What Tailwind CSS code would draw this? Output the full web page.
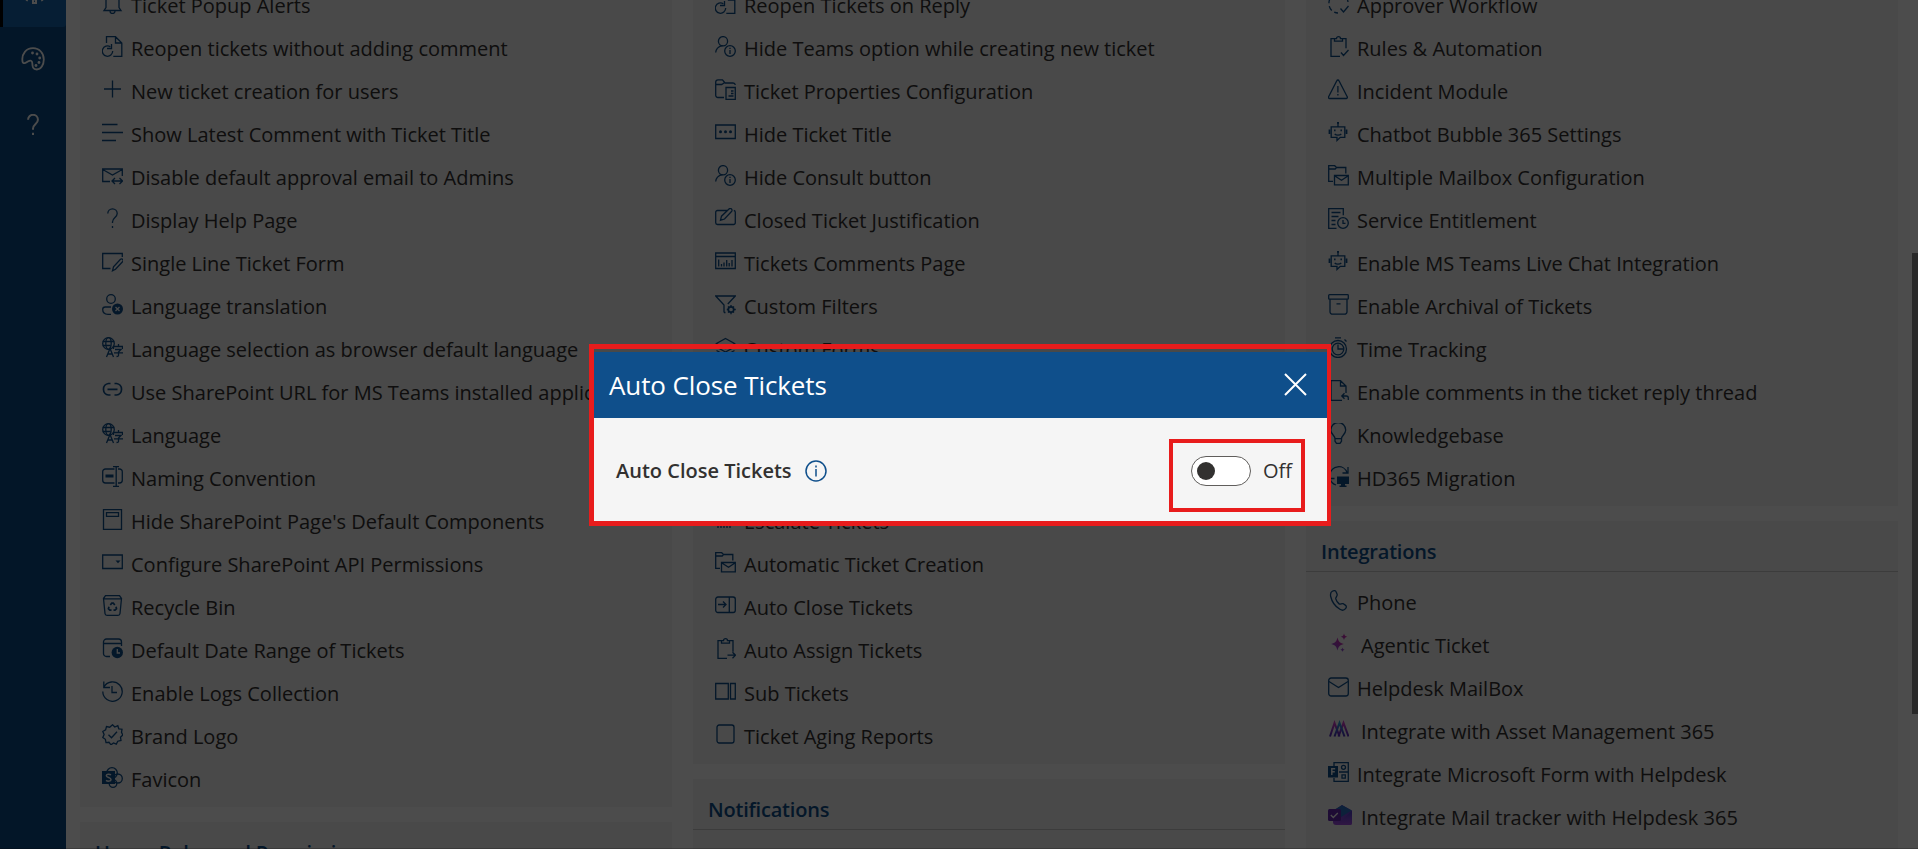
<!DOCTYPE html>
<html lang="en">
<head>
<meta charset="utf-8">
<title>Helpdesk 365 Settings</title>
<script src="https://cdn.jsdelivr.net/npm/@tailwindcss/browser@4"></script>
</head>
<body class="h-screen overflow-hidden bg-white font-['Open_Sans','Noto_Sans',sans-serif] text-[20px] text-[#323130]">

<svg class="absolute size-0" aria-hidden="true">
  <defs>
    <linearGradient id="pink" x1="0" y1="1" x2="1" y2="0"><stop offset="0" stop-color="#7f5ae0"/><stop offset="1" stop-color="#e21ea0"/></linearGradient>
    <linearGradient id="mix" x1="0" y1="0" x2="0" y2="1"><stop offset="0" stop-color="#d040c8"/><stop offset="1" stop-color="#4a28b8"/></linearGradient>
    <linearGradient id="teal" x1="0" y1="0" x2="0" y2="1"><stop offset="0" stop-color="#2fa0d8"/><stop offset="1" stop-color="#4a28b8"/></linearGradient>
    <linearGradient id="violet" x1="0" y1="0" x2="0" y2="1"><stop offset="0" stop-color="#4a3cc8"/><stop offset="1" stop-color="#a04ce0"/></linearGradient>
  </defs>
  <symbol id="bell" viewBox="0 0 21 21"><path d="M2 17.5h17L17 14.500V7.500a6.500 6.500 0 0 0-13 0v7zM8 18a2.500 2.500 0 0 0 5 0"/></symbol>
  <symbol id="reopen" viewBox="0 0 21 21"><path d="M4.500 7V.7h9L19.800 7v13.300h-8.500M13.500.7V7h6.300M8.300 10.700A5.200 5.200 0 1 0 10.700 15M9.500 8v4.500H5"/></symbol>
  <symbol id="plus" viewBox="0 0 21 21"><path d="M10.500 1.500v17M2 10h17"/></symbol>
  <symbol id="lines" viewBox="0 0 21 21"><path d="M0 2.500h15.500M0 10.500h21M0 18.500h14"/></symbol>
  <symbol id="mailswap" viewBox="0 0 21 21"><path d="M8 16.500H.7V4h19.600v7M.7 4.500l9.800 5.500 9.800-5.500M10 16h10.500M13 13l-3 3 3 3M17.500 13l3 3-3 3"/></symbol>
  <symbol id="question" viewBox="0 0 21 21"><path d="M5.800 5.500a4.700 4.700 0 0 1 9.400 0c0 4-4.700 4-4.700 8.500V15"/><path d="M10.500 18v2"/></symbol>
  <symbol id="formedit" viewBox="0 0 21 21"><path d="M8.500 17.500H.7V2.500h19.600V6M10.500 19.800l1-4 7-7.500a1.600 1.600 0 0 1 2 2.500l-7 7.500z"/></symbol>
  <symbol id="userx" viewBox="0 0 21 21"><circle cx="9" cy="5" r="4.300"/><path d="M9 20.300H6C3 20.300.7 18.500.7 15.500c0-1.500 1-2.500 2.500-2.500H9"/><circle cx="15.500" cy="15" r="5.500" fill="currentColor" stroke="none"/><path d="M13.500 13l4 4M17.500 13l-4 4" stroke="#f3f3f3"/></symbol>
  <symbol id="lang" viewBox="0 0 21 21"><circle cx="6.500" cy="6.500" r="5.800"/><ellipse cx="6.500" cy="6.500" rx="2.700" ry="5.800"/><path d="M.7 4.500h11.600M.7 8.500h8"/><path d="M4.500 20l3.500-8.500 3.500 8.500M5.700 17h4.600M16.500 7v2.500M11.500 12V9.500h9V12M13 12.500h6l-2.500 2.500v3.500c0 1-.5 1-2 1M12 15.800h9"/></symbol>
  <symbol id="link" viewBox="0 0 21 21"><path d="M8.500 3.500H6.500a5.800 5.800 0 0 0 0 11.500h2M12.500 3.500h2a5.800 5.800 0 0 1 0 11.500h-2M5.500 9.300h10" stroke-width="1.700"/></symbol>
  <symbol id="rename" viewBox="0 0 21 21"><path d="M12.500 3H3.500A2.800 2.800 0 0 0 .7 5.800v8.400A2.800 2.800 0 0 0 3.500 17h9M16 3h1.500a2.800 2.800 0 0 1 2.800 2.800v8.400a2.800 2.800 0 0 1-2.800 2.800H16M14.200.7v19.600M11 .7h6M11 20.300h6"/><path d="M3.500 10h8" stroke-width="3"/></symbol>
  <symbol id="page" viewBox="0 0 21 21"><path d="M1.500.7h18v19.600h-18zM4.500 3.700h12v3.600h-12z"/></symbol>
  <symbol id="combo" viewBox="0 0 21 21"><path d="M.7 3h19.600v13.500H.7z"/><path d="M13.500 8.500h5l-2.500 2.800z" fill="currentColor" stroke="none"/></symbol>
  <symbol id="bin" viewBox="0 0 21 21"><path d="M1.500 3.500 3.500.7h14l2 2.800-1.500 15a2 2 0 0 1-2 1.800H5a2 2 0 0 1-2-1.800zM1.500 3.900h18"/><path d="M8.300 10l1.500-1.800h1.500l1.500 1.800M14 11.800l.5 2-1.500 1.400h-1.500M9.500 15.200H7.800l-1.400-1.400.6-2" stroke-width="1.700"/></symbol>
  <symbol id="caltime" viewBox="0 0 21 21"><path d="M8 18.500H4.500a3 3 0 0 1-3-3V4a3 3 0 0 1 3-3h12a3 3 0 0 1 3 3v4M1.500 5.500h18"/><circle cx="15.300" cy="14.500" r="5.700" fill="currentColor" stroke="none"/><path d="M15.300 11v4H18" stroke="#f3f3f3"/></symbol>
  <symbol id="history" viewBox="0 0 21 21"><path d="M1.800 6.300A9.700 9.700 0 1 1 .8 10.500M1.800.5V6.500H8M10 5v6.500h5" /></symbol>
  <symbol id="badge" viewBox="0 0 21 21"><path d="M10.500.8l2.300 2.200 3-1.300 1 3.100 3.200.4-.5 3.200 1.300 2.600-2.300 2.300.5 3.200-3.200.7-1.500 2.900-2.800-1.200-2.500 1.900-2-2.500-3 .3-.6-3.300L.8 13.500l1.300-3L.8 7.500l2.800-1.600L4.500 2.600l3.200.6z"/><path d="M6.500 10.800l3 3 5.500-6"/></symbol>
  <symbol id="sharepoint" viewBox="0 0 21 21"><circle cx="10" cy="6" r="5.300"/><circle cx="15.800" cy="11.500" r="4.500"/><circle cx="11" cy="16.500" r="3.800"/><path d="M0 4h13v13H0z" fill="currentColor" stroke="none"/><path d="M9 7.800C7.500 6.800 4.300 6.800 4.300 8.800s4.700 1.400 4.700 3.600-3.500 2-5 1" stroke="#f3f3f3" stroke-width="1.500"/></symbol>
  <symbol id="userinfo" viewBox="0 0 21 21"><circle cx="8" cy="5.200" r="4.600"/><path d="M.7 16.500c0-3 2.500-6.500 7-6.800"/><circle cx="15" cy="15" r="5.300"/><path d="M15 14v4M15 11.700v1.300"/></symbol>
  <symbol id="folderdoc" viewBox="0 0 21 21"><path d="M9 18.500H3A2.300 2.300 0 0 1 .7 16V3A2.300 2.300 0 0 1 3 .9h4.500L10 4h8a2.300 2.300 0 0 1 2.300 2M.7 5.500h6L9 4M11 8.500h9.300v11.800H11zM16 12h2.500M16 14.500h2.500M13.500 17h5"/></symbol>
  <symbol id="dots" viewBox="0 0 21 21"><path d="M.7 3h19.600v13.500H.7z"/><g fill="currentColor" stroke="none"><circle cx="5.500" cy="9.800" r="1.500"/><circle cx="10.500" cy="9.800" r="1.500"/><circle cx="15.500" cy="9.800" r="1.500"/></g></symbol>
  <symbol id="edit" viewBox="0 0 21 21"><path d="M12 2.500H2.500A1.800 1.800 0 0 0 .7 4.300v10.400a1.800 1.800 0 0 0 1.800 1.800h16a1.800 1.800 0 0 0 1.800-1.800V4.300a1.800 1.800 0 0 0-1.500-1.800M5.500 12.200l1-4L14 1a1.700 1.700 0 0 1 2.500 2.500L9.500 11z"/></symbol>
  <symbol id="chart" viewBox="0 0 21 21"><path d="M.7 2h19.600v15.500H.7zM.7 5.500h19.600M3.700 8.500v7M6.500 13v2.500M9 11.500v4M11.700 9v6.500M14.200 12v3.500M17 9v6.500"/></symbol>
  <symbol id="filter" viewBox="0 0 21 21"><path d="M9 18.500V11L.7 2h19.600l-7.500 8M9 18.500h1.500"/><circle cx="16" cy="15.500" r="2.700" stroke-width="1.700"/><path d="M16 11v2M16 18v2.200M11.800 15.500h2M18.500 15.500h2.300M13 12.500l1.300 1.300M19 12.500l-1.300 1.300M13 18.500l1.300-1.300M19 18.500l-1.300-1.300"/></symbol>
  <symbol id="layers" viewBox="0 0 21 21"><path d="M10.500 1.500l9 5-9 5-9-5zM1.500 10l9 5 9-5M1.500 13.500l9 5 9-5"/></symbol>
  <symbol id="bars" viewBox="0 0 21 21"><path d="M3 10v9M6 10v9M9 12v7M12 10v9M15 10v9"/></symbol>
  <symbol id="foldermail" viewBox="0 0 21 21"><path d="M5 16.300H.7V.7h6L8.500 2.500h9.300v6M.7 4h6.500l1.300-1.500M6.500 10.500h13.800v9.300H6.500zM6.500 10.800l7 4.500 6.800-4.500"/></symbol>
  <symbol id="panel" viewBox="0 0 21 21"><rect x=".7" y="2" width="19.600" height="15.500" rx="2.200"/><path d="M14.300 2v15.500M3 9.500h8M8 6.500l3 3-3 3"/></symbol>
  <symbol id="cliparrow" viewBox="0 0 21 21"><path d="M12 20.300H3V2.700h3.500M14.500 2.700H18v11M6.500 5.200V2.700h2a2 2 0 0 1 4 0h2v2.500zM12.500 17.200h7.800M17.500 14.200l3 3-3 3"/></symbol>
  <symbol id="columns" viewBox="0 0 21 21"><path d="M.7 2.500h12.600V18H.7zM15.500 2.500h4.800V18h-4.800z"/></symbol>
  <symbol id="tablet" viewBox="0 0 21 21"><rect x="2" y="1" width="17" height="18" rx="2.200"/></symbol>
  <symbol id="progress" viewBox="0 0 21 21"><path d="M20 9a9.500 9.500 0 0 0-19 2c0 5 4 9 9 9" stroke-dasharray="5 3"/><path d="M12.500 15.500l3 3.500 5-6"/></symbol>
  <symbol id="clipcheck" viewBox="0 0 21 21"><path d="M12 20.300H3V2.700h3.500M14.500 2.700H18v9.500M6.500 5.200V2.700h2a2 2 0 0 1 4 0h2v2.500zM13 16.500l2.500 3 5-5.500"/></symbol>
  <symbol id="warn" viewBox="0 0 21 21"><path d="M8.800 1.700a1.200 1.200 0 0 1 2.200 0l8.200 16a1.200 1.200 0 0 1-1 1.800H1.600a1.200 1.200 0 0 1-1-1.800zM9.900 7v6.500M9.900 15v1.500"/></symbol>
  <symbol id="bot" viewBox="0 0 21 21"><path d="M3.200 4.800h13.600v10.500h-4.500L9 18.500v-3.200H3.200zM10 1v3.800M6.700 12c1.500 1.600 5 1.600 6.600 0"/><path d="M1.500 7.500v4.500M18.500 7.500v4.500M9 .9h2" stroke-width="1.800"/><path d="M6.800 7.500v1.800M13.200 7.500v1.800" stroke-width="1.500"/></symbol>
  <symbol id="sla" viewBox="0 0 21 21"><path d="M8.500 20.300H.7V.7h14.600v6.500M3.500 4.500h9M3.500 8.500h7M3.500 12.500h4M3.500 16.500h4"/><circle cx="15" cy="15" r="5.300"/><path d="M15 12v3.300h2.500"/></symbol>
  <symbol id="archive" viewBox="0 0 21 21"><rect x=".7" y=".7" width="19.600" height="4.500" rx=".8"/><path d="M2 5.200v12.500a2.500 2.500 0 0 0 2.500 2.500h12a2.500 2.500 0 0 0 2.500-2.500V5.200M8.500 9.800h4"/></symbol>
  <symbol id="timer" viewBox="0 0 21 21"><circle cx="10" cy="12" r="8.500"/><circle cx="10" cy="12" r="5.800"/><path d="M7 .8h6M10 7.500V12h5M16.500 2.500l2 2"/></symbol>
  <symbol id="pagereply" viewBox="0 0 21 21"><path d="M14 20.300H3V.7h9.500L18 6v7M12.500.7V6H18M20.300 20v-2c0-1.500-1-2-2-2h-4.500M16.500 13.300L13.800 16l2.700 2.700"/></symbol>
  <symbol id="bulb" viewBox="0 0 21 21"><path d="M7 15.700c0-3.200-4.200-4.500-4.200-8.700a7.200 7.200 0 0 1 14.900 0c0 4.200-4.200 5.500-4.200 8.700zM7 15.700v2.500l1.500 2.100h3.500l1.500-2.100v-2.500"/></symbol>
  <symbol id="sync" viewBox="0 0 21 21"><path d="M2 8.500a8.800 8.800 0 0 1 17-2M20 1v6h-5.500M1 18.500v-6h5.500M2 13c1 3 3 5 6 6"/><path d="M9 10.500h12v7.500h-4v1.500h1.500V21h-7v-1.500h1.500V18H9z" fill="currentColor" stroke="none"/></symbol>
  <symbol id="phone" viewBox="0 0 21 21"><path d="M4.300 1.200c1.700-.9 3.200-.7 4 1l.8 2c.7 1.800-1.700 2.900-1.300 4.700.5 1.800 1.900 4 3.300 5 1.300.9 2.600-1 4.200-.2l2 1.400c1.500 1.100 1.200 2.400.2 3.600-1.300 1.600-3.300 2-5.600.6C7.200 16.500 3.700 11 2.700 6.500c-.5-2.500.1-4.500 1.600-5.300z"/></symbol>
  <symbol id="sparkle" viewBox="0 0 21 21"><g fill="url(#pink)" stroke="none"><path d="M9.500 4.500c1 4 2 5.200 6.300 6.500-4.300 1.300-5.300 2.500-6.300 6.500-1-4-2-5.200-6.300-6.500 4.300-1.300 5.300-2.500 6.300-6.500z"/><path d="M16 .5c.5 2 1.200 2.700 3.200 3.200-2 .5-2.700 1.200-3.200 3.200-.5-2-1.200-2.700-3.200-3.200 2-.5 2.700-1.200 3.200-3.200zM14.500 14.500c.4 1.500.8 1.900 2.300 2.300-1.500.4-1.900.8-2.300 2.200-.4-1.400-.8-1.800-2.300-2.200 1.500-.4 1.900-.8 2.300-2.300z"/></g></symbol>
  <symbol id="mail" viewBox="0 0 21 21"><rect x=".7" y="2" width="19.600" height="18" rx="2.500"/><path d="M1 5.500l9.500 6 9.500-6"/></symbol>
  <symbol id="asset" viewBox="0 0 21 21"><g stroke-width="2"><path d="M2 17.500 6.500 4l5 13.500M10.500 17.500l5-13.500L20.500 17.500" stroke="url(#mix)"/><path d="M6.500 17.500l5-13.500 5 13.500" stroke="url(#teal)"/></g></symbol>
  <symbol id="forms" viewBox="0 0 21 21"><path d="M6 4V.7h14.300v18.600H6V16M11 10h9.300"/><circle cx="15.500" cy="5.300" r="2"/><path d="M14 12.800h3.300v3.400H14z"/><path d="M0 4h10v11.500H0z" fill="currentColor" stroke="none"/><path d="M3.800 13V6.800H7.200M3.800 9.800h3" stroke="#f3f3f3" stroke-width="1.500"/></symbol>
  <symbol id="tracker" viewBox="0 0 24 21"><path d="M5 6l9-6 10 5.500V18a2 2 0 0 1-2 2H8a3 3 0 0 1-3-3z" fill="url(#violet)" stroke="none"/><path d="M5 5.500l9-5.300 9.500 5.300L13 12z" fill="#2a6fc4" stroke="none"/><path d="M24 6v12a2 2 0 0 1-2 2H8z" fill="url(#violet)" stroke="none"/><rect y="4" width="13" height="12" rx="1.500" fill="#6428b0" stroke="none"/><path d="M2.800 10l2.500 2.500L9.800 8" stroke="#fff"/></symbol>
</svg>

<div class="flex h-full overflow-hidden">
  <!-- Navigation rail -->
  <nav class="flex w-[66px] shrink-0 flex-col bg-[#0b4a86] text-white">
    <div class="flex h-[27px] items-start justify-center rounded-br-[3px] border-l-[3px] border-black bg-[#1667ad]">
      <svg class="-mt-[19px] size-[23px]" viewBox="0 0 23 23" fill="none" stroke="currentColor" stroke-width="2"><circle cx="11.500" cy="11.500" r="7"/><path d="M10 18.500v3.500h3v-3.500M5 17l-1.500 3M18 17l1.500 3"/></svg>
    </div>
    <div class="flex h-[66px] items-center justify-center">
      <svg class="mb-[3px] size-[24px]" viewBox="0 0 24 24" fill="none" stroke="currentColor" stroke-width="1.800"><path d="M1.500 14.500C.3 6.500 5.500 1.200 12 1.200c6.500 0 10.800 5 10.800 11.300 0 5.500-3 10-7 10-4.500 0-4.300-3.500-4.500-6.500-.2-2.500-2-3-4-1.700-2 1.400-5.300 3.200-5.800.2z"/><g fill="currentColor" stroke="none"><circle cx="11.500" cy="6" r="1.400"/><circle cx="16" cy="7" r="1.400"/><circle cx="18.700" cy="11" r="1.400"/><circle cx="18" cy="15.500" r="1.400"/><circle cx="15" cy="18.500" r="1.400"/></g></svg>
    </div>
    <div class="flex h-[66px] items-center justify-center">
      <svg class="mb-[3px] size-[22px]" viewBox="0 0 21 21" fill="none" stroke="currentColor" stroke-width="1.900"><use href="#question"/></svg>
    </div>
  </nav>

  <!-- Settings columns -->
  <main class="flex gap-[21px] pl-[14px]">
    <div class="-mt-[16px] flex w-[592px] shrink-0 flex-col gap-[15px]">
      <section class="bg-[#f3f3f3] pb-[6px] pl-[22px]">
        <ul data-rows="bell|Ticket Popup Alerts;reopen|Reopen tickets without adding comment;plus|New ticket creation for users;lines|Show Latest Comment with Ticket Title;mailswap|Disable default approval email to Admins;question|Display Help Page;formedit|Single Line Ticket Form;userx|Language translation;lang|Language selection as browser default language;link|Use SharePoint URL for MS Teams installed application;lang|Language;rename|Naming Convention;page|Hide SharePoint Page's Default Components;combo|Configure SharePoint API Permissions;bin|Recycle Bin;caltime|Default Date Range of Tickets;history|Enable Logs Collection;badge|Brand Logo;sharepoint|Favicon"></ul>
      </section>
      <section class="grow bg-[#f3f3f3]">
        <h2 class="flex h-[50px] items-center border-b border-[#c8c8c8] pt-[12px] pl-[15px] font-semibold tracking-[-0.2px] text-[#0f4f8b]">Users, Roles and Permissions</h2>
      </section>
    </div>

    <div class="-mt-[16px] flex w-[592px] shrink-0 flex-col gap-[15px]">
      <section class="bg-[#f3f3f3] pb-[6px] pl-[22px]">
        <ul data-rows="reopen|Reopen Tickets on Reply;userinfo|Hide Teams option while creating new ticket;folderdoc|Ticket Properties Configuration;dots|Hide Ticket Title;userinfo|Hide Consult button;edit|Closed Ticket Justification;chart|Tickets Comments Page;filter|Custom Filters;layers|Custom Forms;;;;bars|Escalate Tickets;foldermail|Automatic Ticket Creation;panel|Auto Close Tickets;cliparrow|Auto Assign Tickets;columns|Sub Tickets;tablet|Ticket Aging Reports"></ul>
      </section>
      <section class="grow bg-[#f3f3f3]">
        <h2 class="flex h-[51px] items-center border-b border-[#c8c8c8] pt-[11px] pl-[15px] font-semibold tracking-[-0.2px] text-[#0f4f8b]">Notifications</h2>
      </section>
    </div>

    <div class="-mt-[16px] flex w-[592px] shrink-0 flex-col gap-[15px]">
      <section class="bg-[#f3f3f3] pb-[6px] pl-[22px]">
        <ul data-rows="progress|Approver Workflow;clipcheck|Rules &amp; Automation;warn|Incident Module;bot|Chatbot Bubble 365 Settings;foldermail|Multiple Mailbox Configuration;sla|Service Entitlement;bot|Enable MS Teams Live Chat Integration;archive|Enable Archival of Tickets;timer|Time Tracking;pagereply|Enable comments in the ticket reply thread;bulb|Knowledgebase;sync|HD365 Migration"></ul>
      </section>
      <section class="grow bg-[#f3f3f3]">
        <h2 class="flex h-[51px] items-center border-b border-[#c8c8c8] pt-[11px] pl-[15px] font-semibold tracking-[-0.2px] text-[#0f4f8b]">Integrations</h2>
        <ul class="pt-[9px] pl-[22px]" data-rows="phone|Phone;sparkle|Agentic Ticket|w;mail|Helpdesk MailBox;asset|Integrate with Asset Management 365|w;forms|Integrate Microsoft Form with Helpdesk;tracker|Integrate Mail tracker with Helpdesk 365|w"></ul>
      </section>
    </div>
  </main>
</div>

<!-- Scrollbar thumb -->
<div class="absolute top-[253px] right-0 h-[461px] w-[6px] bg-[#8a8a8a]"></div>

<!-- Dimmed backdrop -->
<div class="absolute inset-0 border-b border-black/20 bg-black/70"></div>

<!-- Dialog -->
<div class="absolute top-[344px] left-[589px] flex h-[182px] w-[742px] flex-col border-5 border-r-4 border-[#e81c1c] pt-[3px]">
  <header class="flex h-[66px] shrink-0 items-center justify-between bg-[#0f4f8b] pr-[20px] pl-[15px] text-white">
    <h1 class="pt-px text-[26px] tracking-[-0.1px]">Auto Close Tickets</h1>
    <svg class="mb-[2px] size-[23px]" viewBox="0 0 23 23" stroke="currentColor" stroke-width="2"><path d="M1 1l21 21M22 1L1 22"/></svg>
  </header>
  <div class="flex h-[103px] shrink-0 items-start justify-between bg-[#f5f5f5] px-[22px]">
    <div class="flex h-[103px] items-center gap-[13px] pt-[3px]">
      <span class="font-semibold">Auto Close Tickets</span>
      <svg class="size-[22px]" viewBox="0 0 22 22" fill="none" stroke="#0f4f8b" stroke-width="1.500"><circle cx="11" cy="11" r="10"/><path d="M11 9v7.500M11 5.500v2"/></svg>
    </div>
    <div class="mt-[21px] flex h-[73px] w-[136px] items-center gap-[12px] border-4 border-[#e81c1c] pb-[9px] pl-[18px]">
      <div class="flex h-[30px] w-[60px] shrink-0 items-center rounded-full border border-[#605e5c] bg-white pl-[5px]"><div class="size-[18px] rounded-full bg-[#323130]"></div></div>
      <span>Off</span>
    </div>
  </div>
</div>

<script>
  document.querySelectorAll('[data-rows]').forEach(list => {
    list.innerHTML = list.dataset.rows.split(';').map(row => {
      const [icon, label, wide] = row.split('|');
      if (!label) return '<li class="h-[43px]"></li>';
      const size = icon === 'tracker' ? 'w-[24px]' : 'w-[21px]';
      const gap = wide ? (icon === 'tracker' ? 'gap-[9px]' : 'gap-[12px]') : 'gap-[8px]';
      return `<li class="flex h-[43px] items-center ${gap}"><svg class="mb-[5px] h-[21px] ${size} shrink-0 text-[#0f4f8b]" fill="none" stroke="currentColor" stroke-width="1.300"><use href="#${icon}"/></svg><span class="whitespace-nowrap">${label.replace('&', '&amp;')}</span></li>`;
    }).join('');
  });
</script>
</body>
</html>
